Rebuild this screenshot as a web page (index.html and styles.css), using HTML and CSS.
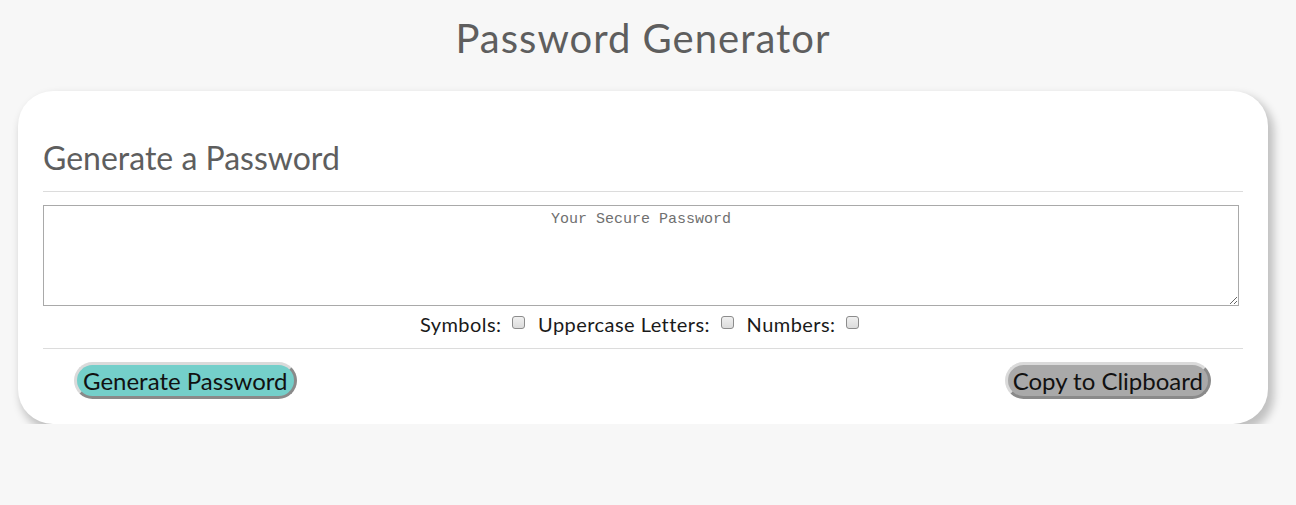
FILE: index.html
```html
<!DOCTYPE html>
<html lang="en">
<head>
<meta charset="utf-8">
<title>Password Generator</title>
<link rel="stylesheet" href="styles.css">
</head>
<body>
  <h1 class="page-title">Password Generator</h1>
  <div class="card">
    <div class="card-header">
      <h2 class="card-title">Generate a Password</h2>
    </div>
    <div class="card-body">
      <textarea class="password" placeholder="Your Secure Password" readonly></textarea>
      <div class="options">
        <label class="option">Symbols: <input type="checkbox"></label>
        <label class="option">Uppercase Letters: <input type="checkbox"></label>
        <label class="option">Numbers: <input type="checkbox"></label>
      </div>
    </div>
    <div class="card-footer">
      <button class="btn btn-generate">Generate Password</button>
      <button class="btn btn-copy">Copy to Clipboard</button>
    </div>
  </div>
</body>
</html>
```

FILE: styles.css
```css
html, body {
  margin: 0;
  padding: 0;
}
body {
  background: #f7f7f7;
  font-family: Lato, "Noto Sans", sans-serif;
  color: #222;
}
.page-title {
  margin: 0;
  padding: 14px 10px 0 0;
  text-align: center;
  font-size: 40px;
  line-height: 48px;
  font-weight: 400;
  letter-spacing: 1px;
  color: #5e5e5e;
}
.card {
  margin: 29px 28px 0 18px;
  background: #fff;
  border-radius: 35px;
  padding: 0 25px;
  box-shadow: 4px 6px 9px 2px rgba(0, 0, 0, 0.22);
}
.card-header {
  padding: 48px 0 14px;
  border-bottom: 1px solid #dcdcdc;
}
.card-title {
  margin: 0;
  font-size: 32px;
  line-height: 38px;
  font-weight: 400;
  color: #5e5e5e;
}
.card-body {
  padding-top: 13px;
  border-bottom: 1px solid #dcdcdc;
}
.password {
  display: block;
  box-sizing: border-box;
  width: 1196px;
  height: 101px;
  margin: 0;
  border: 1px solid #a9a9a9;
  padding: 5px 3px 3px;
  resize: both;
  text-align: center;
  font-family: "Liberation Mono", monospace;
  font-size: 15px;
}
.password::placeholder {
  color: #707070;
}
.options {
  display: flex;
  justify-content: center;
  gap: 13px;
  padding: 6px 7px 12px 0;
  font-size: 20px;
  line-height: 24px;
  letter-spacing: 0.45px;
  color: #1a1a1a;
}
.option input {
  appearance: none;
  -webkit-appearance: none;
  box-sizing: border-box;
  margin: 0 0 0 5px;
  width: 13px;
  height: 13px;
  border: 1px solid #8c8c8c;
  border-radius: 3px;
  background: linear-gradient(#f0f0f0, #dcdcdc);
  vertical-align: 3px;
}
.card-footer {
  display: flex;
  justify-content: space-between;
  padding: 13px 32px 25px 31px;
}
.btn {
  font-family: inherit;
  font-size: 24px;
  line-height: 29px;
  color: #111;
  padding: 1px 6px;
  border-radius: 20px;
  border-style: solid;
  border-width: 3px;
  border-color: #dadada #8a8a8a #8a8a8a #dadada;
  cursor: pointer;
}
.btn-generate {
  background: #74cfca;
}
.btn-copy {
  background: #a9a9a9;
  padding: 1px 5px;
}
```
